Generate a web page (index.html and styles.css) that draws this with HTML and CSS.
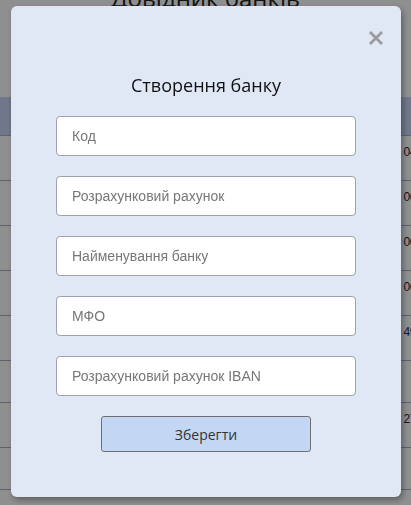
FILE: index.html
```html
<!DOCTYPE html>
<html lang="uk">
<head>
<meta charset="utf-8">
<title>Довідник банків</title>
<link rel="stylesheet" href="styles.css">
</head>
<body>
<div class="page">
  <h1 class="page-title">Довідник банків</h1>
  <div class="table-wrap">
    <table class="banks">
      <colgroup><col class="c1"><col class="c2"><col class="c3"></colgroup>
      <thead>
        <tr><th></th><th></th><th></th></tr>
      </thead>
      <tbody>
        <tr class="r45"><td></td><td></td><td><span class="num">04</span></td></tr>
        <tr class="r45"><td></td><td></td><td><span class="num">00</span></td></tr>
        <tr class="r45"><td></td><td></td><td><span class="num">00</span></td></tr>
        <tr class="r45"><td></td><td></td><td><span class="num">06</span></td></tr>
        <tr class="r45"><td></td><td></td><td><span class="num blue">49</span></td></tr>
        <tr class="r42"><td></td><td></td><td></td></tr>
        <tr class="r45"><td></td><td></td><td><span class="num">27</span></td></tr>
        <tr class="r42"><td></td><td></td><td></td></tr>
      </tbody>
    </table>
  </div>
</div>

<div class="overlay">
  <div class="modal">
    <div class="modal-head">
      <button class="close" type="button" aria-label="Закрити">
        <svg width="14" height="14" viewBox="0 0 14 14"><path d="M2 2 L12 12 M12 2 L2 12" stroke="#9b9b9b" stroke-width="2.8" stroke-linecap="square"/></svg>
      </button>
    </div>
    <h2 class="modal-title">Створення банку</h2>
    <form class="form">
      <input class="field" type="text" placeholder="Код">
      <input class="field" type="text" placeholder="Розрахунковий рахунок">
      <input class="field" type="text" placeholder="Найменування банку">
      <input class="field" type="text" placeholder="МФО">
      <input class="field" type="text" placeholder="Розрахунковий рахунок IBAN">
      <button class="save" type="button">Зберегти</button>
    </form>
  </div>
</div>
</body>
</html>
```

FILE: styles.css
```css
* { box-sizing: border-box; }

html, body {
  margin: 0;
  padding: 0;
  width: 411px;
  height: 505px;
  overflow: hidden;
  background: #ffffff;
}

.page {
  font-family: "Open Sans", "Noto Sans", sans-serif;
  height: 505px;
  overflow: hidden;
}

.page-title {
  margin: -16px 0 0;
  text-align: center;
  font-size: 24px;
  line-height: 28px;
  font-weight: 400;
  color: #222;
}

.table-wrap {
  margin-top: 85px;
  width: 411px;
  overflow: hidden;
}

.banks {
  border-collapse: collapse;
  table-layout: fixed;
  width: 520px;
}

.banks .c1 { width: 51px; }
.banks .c2 { width: 348px; }
.banks .c3 { width: 121px; }

.banks th {
  height: 38px;
  background: #cad5f6;
  border-bottom: 1px solid #a7afcc;
}

.banks td {
  border-bottom: 1px solid #a7afcc;
  border-right: 1px solid #a7afcc;
  padding: 9px 4px 0;
  vertical-align: top;
  font-family: "Liberation Sans", Arial, sans-serif;
  font-size: 12px;
  letter-spacing: -0.5px;
  color: #2a2240;
}

.banks tr.r45 td { height: 45px; }
.banks tr.r42 td { height: 42px; }

.num.blue { color: #1c2f6e; }

.overlay {
  position: fixed;
  inset: 0;
  background: rgba(0, 0, 0, 0.44);
  padding: 6px 10px 8px 11px;
  display: flex;
}

.modal {
  flex: 1;
  background: #e1e8f5;
  border-radius: 6px;
  box-shadow: 2px 3px 6px rgba(0, 0, 0, 0.35);
  display: flex;
  flex-direction: column;
  align-items: center;
}

.modal-head {
  align-self: stretch;
  display: flex;
  justify-content: flex-end;
  padding: 25px 18px 0 0;
}

.close {
  width: 14px;
  height: 14px;
  padding: 0;
  border: 0;
  background: none;
  display: flex;
}

.modal-title {
  margin: 28px 0 0;
  font-family: "Open Sans", "Noto Sans", sans-serif;
  font-size: 18px;
  line-height: 24px;
  font-weight: 400;
  color: #111;
}

.form {
  margin-top: 19px;
  display: flex;
  flex-direction: column;
  align-items: center;
  gap: 20px;
}

.field {
  width: 300px;
  height: 40px;
  margin: 0;
  padding: 0 15px;
  border: 1px solid #9ba1ae;
  border-radius: 4px;
  background: #fff;
  font-family: "Liberation Sans", Arial, sans-serif;
  font-size: 14px;
  color: #333;
  outline: none;
}

.field::placeholder {
  color: #777;
}

.save {
  width: 210px;
  height: 36px;
  margin: 0;
  border: 1px solid #6f6f73;
  border-radius: 3px;
  background: #c3d7f5;
  font-family: "Open Sans", "Noto Sans", sans-serif;
  font-size: 14px;
  color: #333;
}
```
